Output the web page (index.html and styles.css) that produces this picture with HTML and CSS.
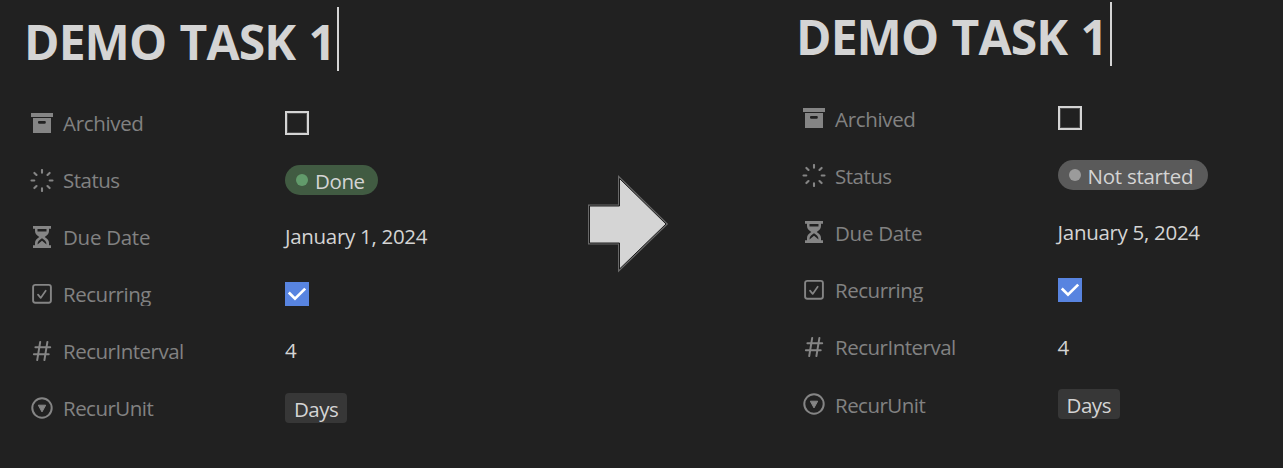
FILE: index.html
```
<!DOCTYPE html>
<html lang="en">
<head>
<meta charset="utf-8">
<title>Demo Task</title>
<link rel="stylesheet" href="styles.css">
</head>
<body>
<svg class="defs" width="0" height="0">
  <symbol id="archive" viewBox="0 0 24 23"><path fill="currentColor" fill-rule="evenodd" d="M1 1h22v4H1zM3 6h18v15H3zM9 9a1 1 0 0 0-1 1v.5a1.3 1.3 0 0 0 1.3 1.3h5.2a1.3 1.3 0 0 0 1.3-1.3V10a1 1 0 0 0-1-1z"/></symbol>
  <symbol id="status" viewBox="0 0 24 23"><path fill="none" stroke="currentColor" stroke-width="2.100" stroke-linecap="round" d="M12 1v2.800M12 19.200v2.800M1.500 11.500h2.800M19.700 11.500h2.800M4.400 3.900l2.100 2.100M17.500 17l2.100 2.100M4.400 19.100l2.100-2.100M17.500 6l2.100-2.100"/></symbol>
  <symbol id="hourglass" viewBox="0 0 24 23"><path fill="currentColor" fill-rule="evenodd" d="M3 0h18v2.700h-2V5c0 3-2 4.400-4.300 6C17 12.600 19 14 19 17v2.300h2V22H3v-2.700h2V17c0-3 2-4.400 4.300-6C7 9.400 5 8 5 5V2.700H3zM7.500 2.900v2.600h9V2.900zM12 12.300c-2.500 1.600-4.500 3-4.500 6.200l4.500-3.700 4.500 3.700c0-3.200-2-4.600-4.500-6.200z"/></symbol>
  <symbol id="check" viewBox="0 0 24 23"><g fill="none" stroke="currentColor" stroke-width="1.900" stroke-linecap="round" stroke-linejoin="round"><rect x="3.100" y="1.900" width="17.800" height="17.800" rx="2.200"/><path stroke-width="1.700" d="M8 11.600l2.700 3.300L15.700 7.700"/></g></symbol>
  <symbol id="hash" viewBox="0 0 24 23"><path fill="none" stroke="currentColor" stroke-width="2" stroke-linecap="round" d="M10.200 1.900L7.200 20.100M17.400 1.900l-3 18.200M5.400 7.300h14.800M3.900 14.300h14.800"/></symbol>
  <symbol id="select" viewBox="0 0 24 23"><circle cx="12" cy="11" r="9.700" fill="none" stroke="currentColor" stroke-width="2"/><path fill="currentColor" stroke="currentColor" stroke-linejoin="round" d="M8.300 8.200h7.400L12 14.900z"/></symbol>
  <symbol id="tick" viewBox="0 0 24 24"><path fill="none" stroke="#fff" stroke-width="2.700" d="M3.800 10.500l6.200 6.200L20.200 6.600"/></symbol>
</svg>
<main class="board">
  <section class="task before">
    <h1 class="title"><span class="title-text">DEMO TASK 1</span></h1>
    <div class="row"><svg class="icon"><use href="#archive"/></svg><span class="label t-archived">Archived</span><span class="box"></span></div>
    <div class="row"><svg class="icon"><use href="#status"/></svg><span class="label t-status">Status</span><span class="pill done"><i class="dot"></i><span class="t-done">Done</span></span></div>
    <div class="row"><svg class="icon"><use href="#hourglass"/></svg><span class="label t-due">Due Date</span><span class="value t-date">January 1, 2024</span></div>
    <div class="row"><svg class="icon"><use href="#check"/></svg><span class="label t-recurring">Recurring</span><svg class="box checked"><use href="#tick"/></svg></div>
    <div class="row"><svg class="icon"><use href="#hash"/></svg><span class="label t-interval">RecurInterval</span><span class="value">4</span></div>
    <div class="row"><svg class="icon"><use href="#select"/></svg><span class="label t-unit">RecurUnit</span><span class="tag">Days</span></div>
  </section>
  <svg class="arrow" viewBox="0 0 84 100"><path d="M3.500 32h30V4.500L80 50 33.500 95V69H3.500z" fill="none" stroke="#686868" stroke-width="3"/><path d="M3.500 32h30V4.500L80 50 33.500 95V69H3.500z" fill="#d5d5d5" stroke="#1c1c1c" stroke-width="1"/></svg>
  <section class="task after">
    <h1 class="title"><span class="title-text">DEMO TASK 1</span></h1>
    <div class="row"><svg class="icon"><use href="#archive"/></svg><span class="label t-archived">Archived</span><span class="box"></span></div>
    <div class="row"><svg class="icon"><use href="#status"/></svg><span class="label t-status">Status</span><span class="pill idle"><i class="dot"></i><span class="t-idle">Not started</span></span></div>
    <div class="row"><svg class="icon"><use href="#hourglass"/></svg><span class="label t-due">Due Date</span><span class="value t-date">January 5, 2024</span></div>
    <div class="row"><svg class="icon"><use href="#check"/></svg><span class="label t-recurring">Recurring</span><svg class="box checked"><use href="#tick"/></svg></div>
    <div class="row"><svg class="icon"><use href="#hash"/></svg><span class="label t-interval">RecurInterval</span><span class="value">4</span></div>
    <div class="row"><svg class="icon"><use href="#select"/></svg><span class="label t-unit">RecurUnit</span><span class="tag">Days</span></div>
  </section>
</main>
</body>
</html>
```
FILE: styles.css
```
* { box-sizing: border-box; }
body {
  margin: 0;
  background: #212121;
  color: #d4d4d4;
  font: 20.5px/30px "Open Sans", "Noto Sans", sans-serif;
}
.defs { display: block; height: 0; }
.board {
  display: grid;
  grid-template-columns: 586px 84px 102px 511px;
  height: 468px;
  overflow: hidden;
}
.task { --row: 57px; padding: 7px 0 0 24px; white-space: nowrap; }
.after { --row: 57.2px; grid-column: 4; padding: 2px 0 0 24px; }
.title {
  display: flex;
  width: 315px;
  height: 64px;
  margin: 0 0 24px;
  border-right: 2px solid #d4d4d4;
  font-size: 48px;
  line-height: 69px;
  font-weight: 700;
}
.after .title { width: 316px; }
.title-text { letter-spacing: -0.900px; word-spacing: 1.700px; }
.row {
  display: grid;
  grid-template-columns: 33px 222px max-content;
  align-items: center;
  height: var(--row);
  padding-left: 6px;
}
.after .row { grid-template-columns: 33px 222.600px max-content; }
.icon { width: 24px; height: 23px; color: #858585; }
.label { color: #828282; height: 24px; line-height: 25px; }
.before .label { margin-bottom: 2px; }
.t-archived { letter-spacing: -0.330px; }
.t-status { letter-spacing: -0.500px; }
.t-due { letter-spacing: -0.280px; }
.t-recurring { letter-spacing: -0.480px; overflow: hidden; }
.t-interval { letter-spacing: -0.500px; }
.t-unit { letter-spacing: -0.520px; }
.t-done { letter-spacing: -0.400px; }
.t-idle { letter-spacing: -0.270px; }
.t-date { letter-spacing: -0.300px; }
.value { margin-bottom: 1px; }
.before .value { margin-bottom: 3px; }
.box {
  width: 24px;
  height: 24px;
  margin-bottom: 1px;
  border: 2px solid #d4d4d4;
  box-shadow: inset 0 0 0 1px #4a4a4a;
}
.checked { border: 0; background: #5884e0; box-shadow: none; }
.pill {
  display: flex;
  align-items: center;
  height: 30px;
  width: 93px;
  margin-bottom: 1px;
  padding-left: 11px;
  border-radius: 15px;
}
.pill span { padding-top: 2px; }
.idle { width: 150px; }
.dot { width: 12px; height: 12px; margin-right: 7px; border-radius: 50%; }
.done { background: #415b42; }
.done .dot { background: #629b6b; }
.idle { background: #5a5a5a; }
.idle .dot { background: #9b9b9b; }
.tag {
  width: 62px;
  height: 30px;
  margin-bottom: 1px;
  padding-left: 9px;
  border-radius: 4px;
  background: #373737;
  line-height: 32px;
  letter-spacing: -0.500px;
}
.arrow { width: 84px; height: 100px; margin-top: 174px; }
```
